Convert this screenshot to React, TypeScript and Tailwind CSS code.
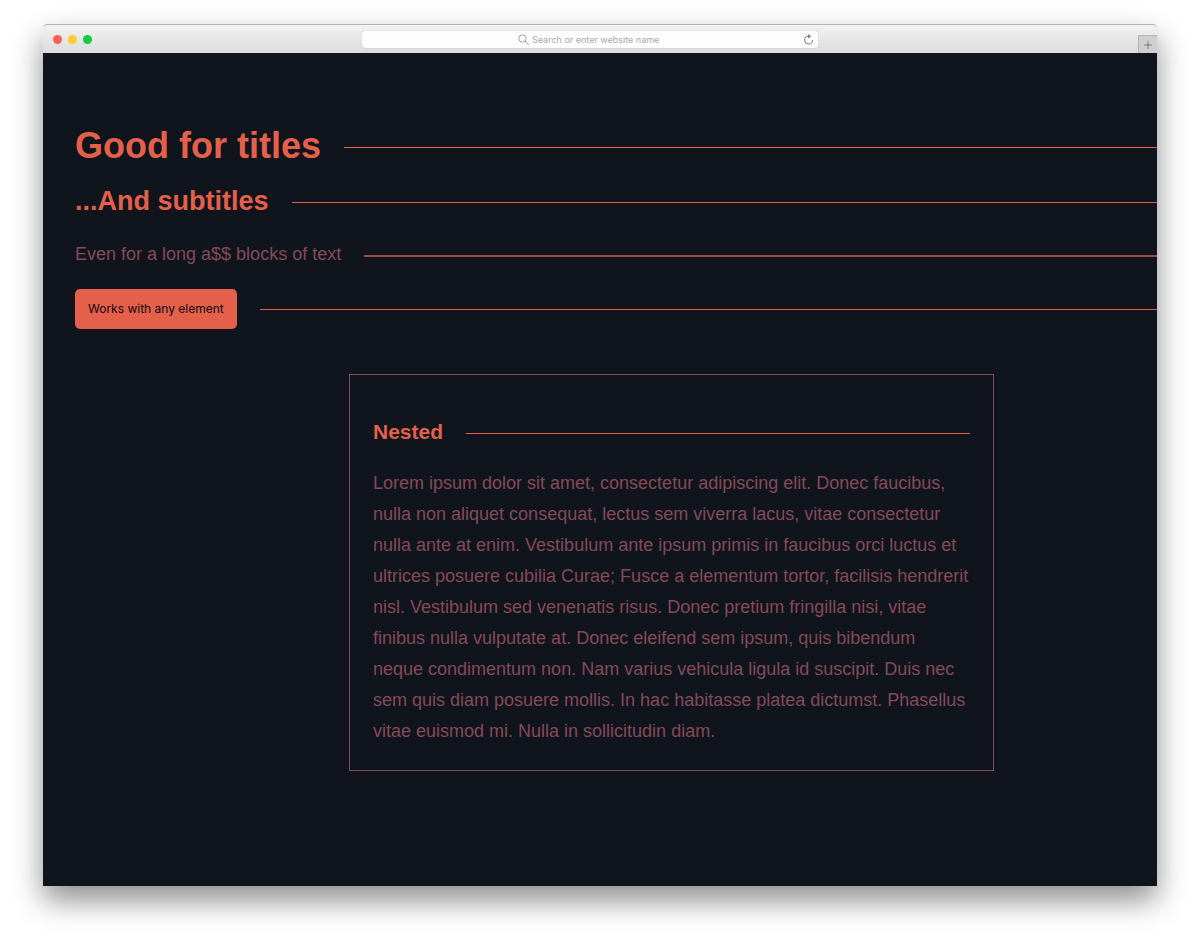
import React from 'react';
import { Plus } from 'lucide-react';

const LOREM =
  'Lorem ipsum dolor sit amet, consectetur adipiscing elit. Donec faucibus, nulla non aliquet consequat, lectus sem viverra lacus, vitae consectetur nulla ante at enim. Vestibulum ante ipsum primis in faucibus orci luctus et ultrices posuere cubilia Curae; Fusce a elementum tortor, facilisis hendrerit nisl. Vestibulum sed venenatis risus. Donec pretium fringilla nisi, vitae finibus nulla vulputate at. Donec eleifend sem ipsum, quis bibendum neque condimentum non. Nam varius vehicula ligula id suscipit. Duis nec sem quis diam posuere mollis. In hac habitasse platea dictumst. Phasellus vitae euismod mi. Nulla in sollicitudin diam.';

interface LinedProps {
  children: React.ReactNode;
  lineClass?: string;
}

// Puts a rule after its content that fills the rest of the row
const Lined: React.FC<LinedProps> = ({ children, lineClass = 'mt-0.5 h-px bg-[#e5604a]' }) => (
  <div className="flex items-center gap-[23px]">
    {children}
    <div className={`flex-1 ${lineClass}`} />
  </div>
);

const BrowserBar: React.FC = () => (
  <div className="grid grid-cols-[319fr_456fr_339fr] items-center h-[29px] rounded-t border-t border-[#b4b4b4] bg-gradient-to-b from-[#f2f2f2] to-[#dcdcdc]">
    <div className="flex gap-[6px] pl-[10px]">
      <span className="size-[9px] rounded-full bg-[#f96057]" />
      <span className="size-[9px] rounded-full bg-[#f8ce2e]" />
      <span className="size-[9px] rounded-full bg-[#16cc3e]" />
    </div>
    <label className="flex items-center h-[17px] px-1 rounded-[3px] bg-[#fdfdfd] shadow-[0_0_1px_rgba(0,0,0,0.3)]">
      <span className="flex-1" />
      <svg className="size-[11px] mr-[3px] text-[#999]" viewBox="0 0 11 11" fill="none" stroke="currentColor">
        <circle cx="4.5" cy="4.5" r="3.7" strokeWidth="0.9" />
        <path d="M7.2 7.2L10.4 10.4" strokeWidth="1" strokeLinecap="round" />
      </svg>
      <input
        type="text"
        aria-label="Website address"
        placeholder="Search or enter website name"
        className="w-[130px] text-[9px] leading-[17px] font-['Inter',sans-serif] placeholder:text-[#aaa] outline-none"
      />
      <span className="flex flex-1 justify-end">
        <button type="button" aria-label="Reload">
          <svg className="block size-[11px] text-[#777]" viewBox="0 0 11 11" fill="none">
            <path d="M5.6 2.2A3.9 3.9 0 1 0 9.4 6" stroke="currentColor" strokeWidth="1" />
            <path d="M5.2 0L8.2 2.2L5.2 4.4Z" fill="currentColor" />
          </svg>
        </button>
      </span>
    </label>
    <button
      type="button"
      aria-label="New tab"
      className="self-end justify-self-end flex items-center justify-center w-[19px] h-[18px] border-l border-t border-[#b5b5b5] bg-[#cfcfcf]"
    >
      <Plus className="size-3 text-[#777]" strokeWidth={2} />
    </button>
  </div>
);

export default function App() {
  return (
    <div className="min-h-screen bg-white px-[43px] pt-6 pb-[60px] flex flex-col font-['Liberation_Sans',Arial,sans-serif]">
      <div className="flex-1 flex flex-col rounded-t shadow-[0_14px_30px_rgba(0,0,0,0.45)]">
        <BrowserBar />
        <main className="flex-1 bg-[#10141c] pl-8 pt-[72px] pb-24 text-[#854a5a]">
          <Lined>
            <h1 className="text-[36px] leading-[42px] font-bold text-[#e5604a]">Good for titles</h1>
          </Lined>
          <div className="mt-4">
            <Lined>
              <h2 className="text-[27px] leading-[36px] font-bold text-[#e5604a]">...And subtitles</h2>
            </Lined>
          </div>
          <div className="mt-5">
            <Lined lineClass="mt-0.5 h-0.5 bg-[#994a4b]">
              <p className="text-[18px] leading-[31px]">Even for a long a$$ blocks of text</p>
            </Lined>
          </div>
          <div className="mt-[19px]">
            <Lined lineClass="h-px bg-[#e5604a]">
              <button
                type="button"
                className="h-10 px-[13px] rounded-[5px] bg-[#e5604a] text-[12px] leading-4 text-[#10080c] font-['Inter',sans-serif]"
              >
                Works with any element
              </button>
            </Lined>
          </div>
          <section className="max-w-[645px] ml-auto mr-[163px] mt-[45px] border border-[#854a5a] px-[23px] pt-11 pb-[23px]">
            <Lined>
              <h3 className="text-[21px] leading-[26px] font-bold text-[#e5604a]">Nested</h3>
            </Lined>
            <p className="mt-[23px] text-[18px] leading-[31px]">{LOREM}</p>
          </section>
        </main>
      </div>
    </div>
  );
}
